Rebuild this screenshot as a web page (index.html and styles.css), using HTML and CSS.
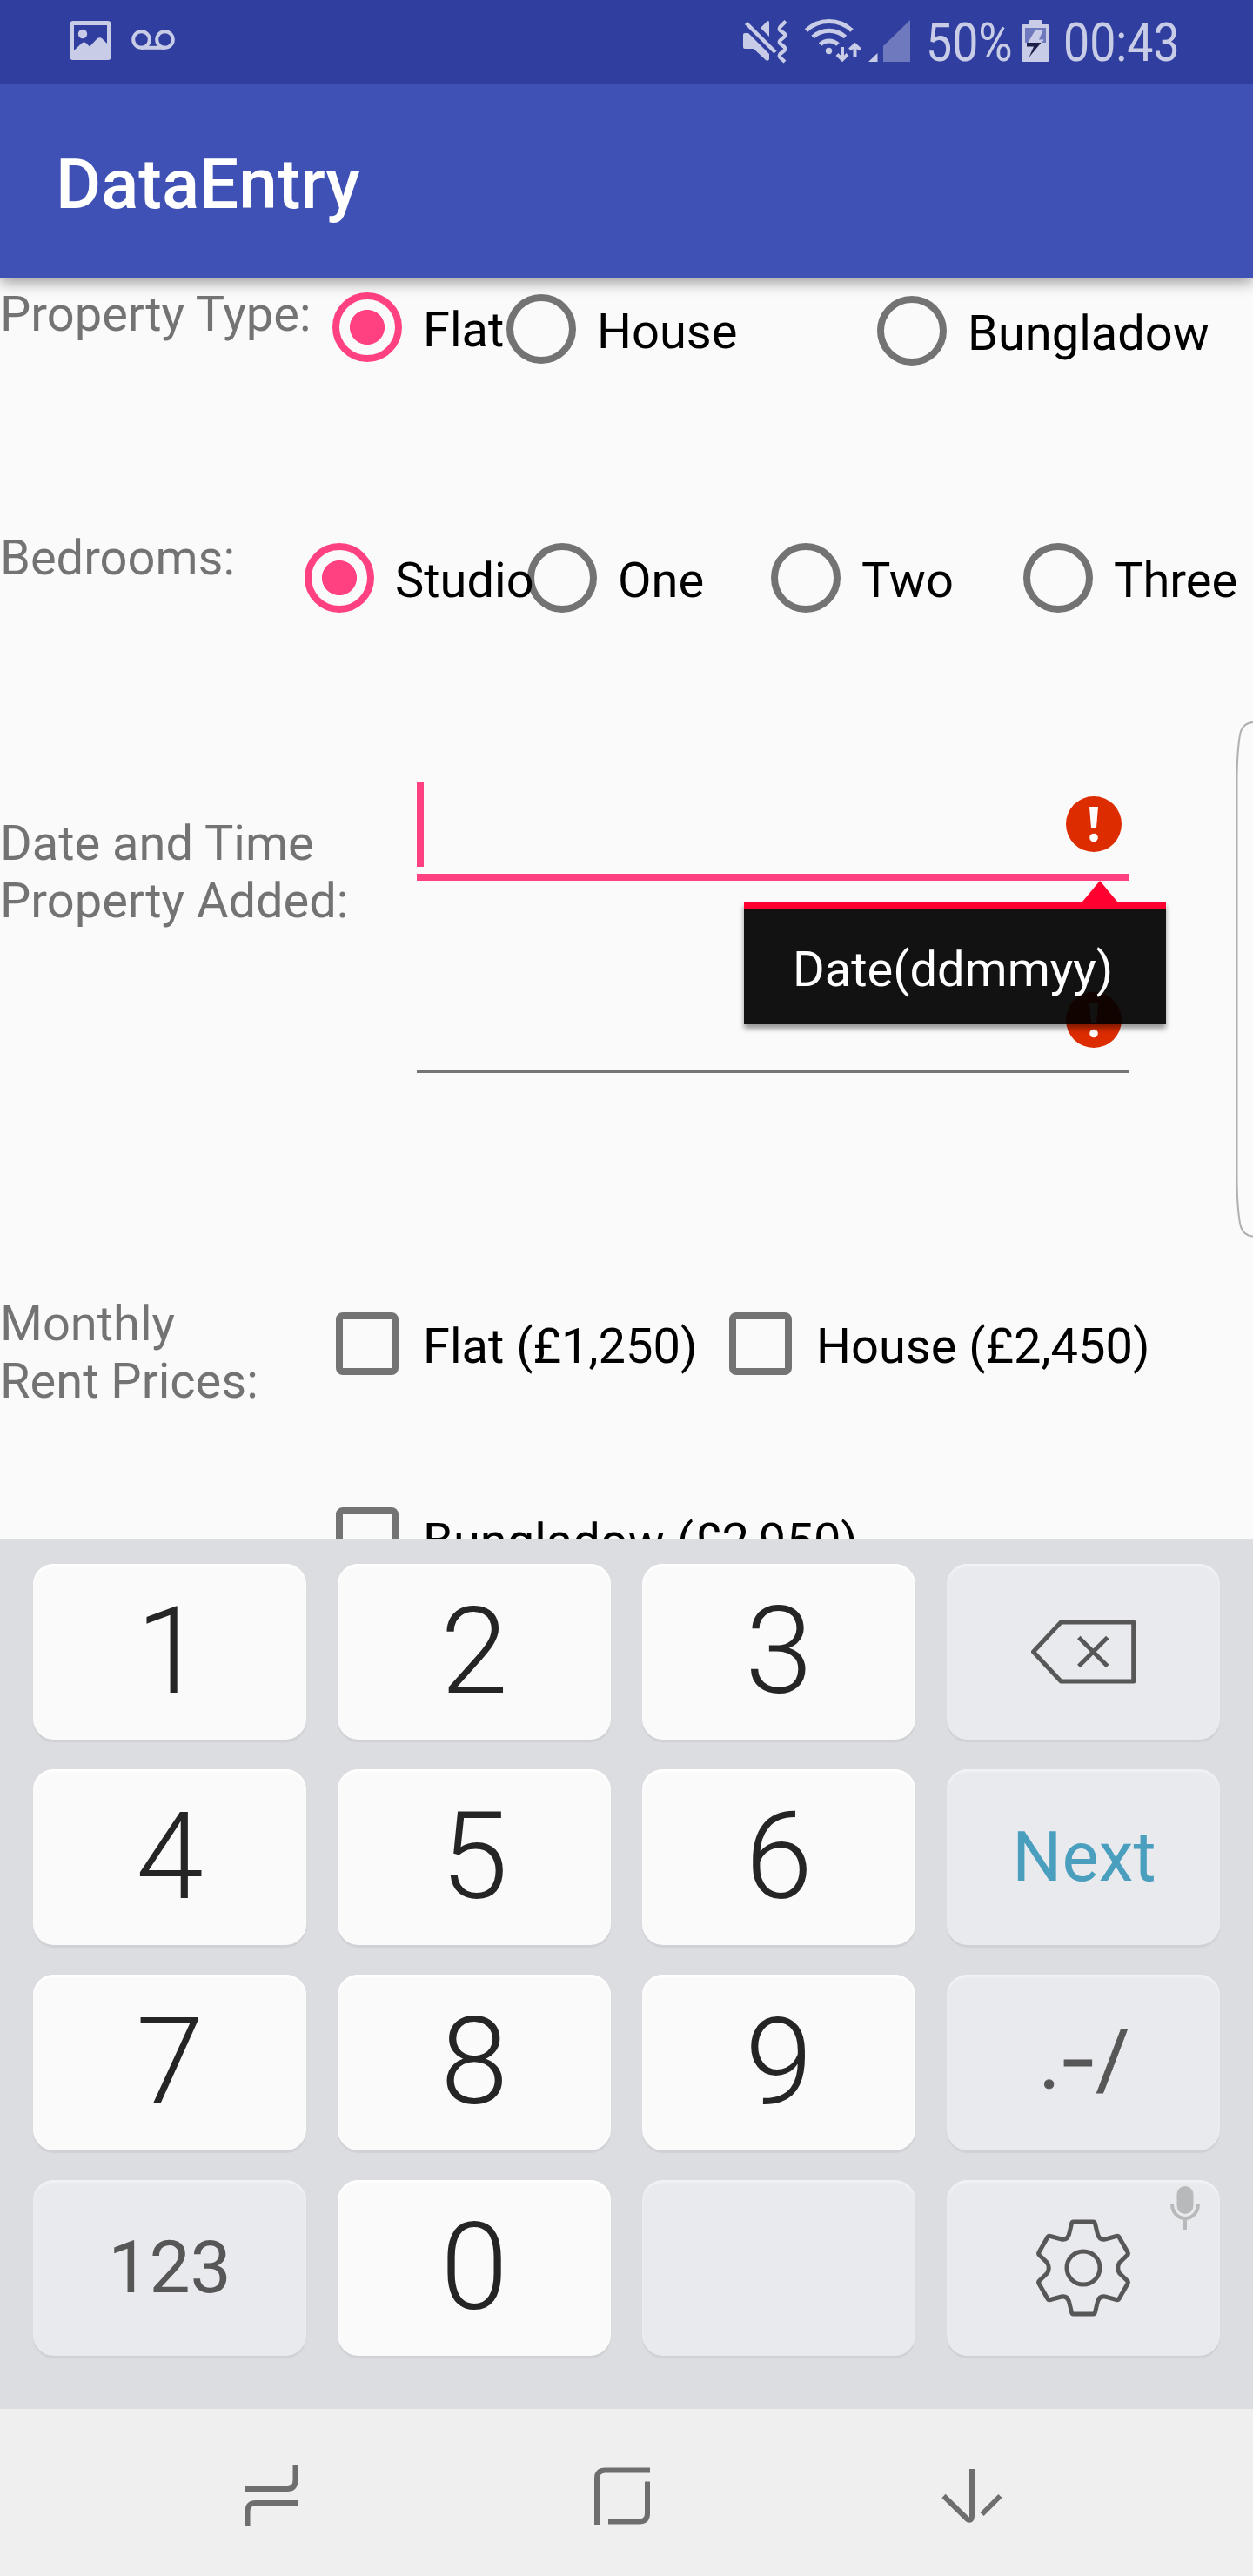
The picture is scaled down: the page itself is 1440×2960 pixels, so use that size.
FILE: index.html
```html
<!DOCTYPE html>
<html lang="en">
<head>
<meta charset="utf-8">
<title>DataEntry</title>
<link rel="stylesheet" href="styles.css">
</head>
<body>
<div class="screen">
  <div class="status">
    <svg class="s-image" viewBox="80 24 48 46" width="48" height="46"><path fill-rule="evenodd" d="M84 24H124Q127.500 24 127.500 27.500V65.500Q127.500 69 124 69H84Q80.500 69 80.500 65.500V27.500Q80.500 24 84 24ZM85 29V58L94 49.500Q96.500 47.500 99 49.500L103 53.500L111.500 44.500Q114.500 42 117.500 44.500L123 50V29Z"/><circle cx="95" cy="39" r="5.200"/></svg>
    <svg class="s-voice" viewBox="150 33 52 25" width="52" height="25"><g fill="none" stroke="#c9cce6" stroke-width="4"><circle cx="162.500" cy="45.500" r="9.300"/><circle cx="189.500" cy="45.500" r="9.300"/><path d="M162 54.800H190"/></g></svg>
    <svg class="s-mute" viewBox="850 20 60 56" width="60" height="56"><path d="M856 38H860L884 62V68Q883 71 880 69L866 56H856Q854 56 854 54V40Q854 38 856 38ZM874 32L881.500 24.500Q884 23 884 26V42Z"/><path d="M859.500 24.500L893.500 58.500" stroke="#303f9f" stroke-width="3"/><path d="M857.500 26.500L891 60" stroke="#c9cce6" stroke-width="4.500"/><path d="M903 24.500L896.500 31Q895 33 896.500 35L901.500 38.500Q903 40 901.500 42L896.500 46.500Q895 48 896.500 50L901.500 54Q903 56 901.500 58L896.500 62Q895 64 896.500 66L902 71" fill="none" stroke="#c9cce6" stroke-width="4.200"/></svg>
    <svg class="s-wifi" viewBox="920 20 130 56" width="130" height="56"><circle cx="952.500" cy="58.500" r="3.700"/><g fill="none" stroke="#c9cce6" stroke-width="5"><path d="M942.500 51A15 15 0 0 1 963 51M934 42.500A28 28 0 0 1 971.500 42.500M926.500 35A38 38 0 0 1 979 35"/><path stroke-width="4" d="M968 54V68M962 62.500L968 68.500L974 62.500M982.500 65.500V52M976.500 57L982.500 51.500L988.500 57"/></g><path d="M998 71L1008.500 61V71Z"/><path d="M1015 71V53L1046 23V71Z" fill="#6f79be"/></svg>
    <span class="s-text s-percent">50%</span>
    <svg class="s-batt" viewBox="1172 20 36 56" width="36" height="56"><path d="M1184 23H1196Q1197.500 23 1197.500 25V28H1204Q1206 28 1206 30V69Q1206 71 1204 71H1176Q1174 71 1174 69V30Q1174 28 1176 28H1182.500V25Q1182.500 23 1184 23Z"/><path d="M1178 32H1202V49H1178Z" fill="#6f79be"/><path d="M1189.500 35H1198.500L1194 45.500H1199.500L1197 49.500H1181Z"/><path d="M1180 49H1196.500L1182.500 66L1188 53.500H1180Z" fill="#1a2047"/></svg>
    <span class="s-text s-clock">00:43</span>
  </div>
  <header class="appbar"><h1>DataEntry</h1></header>

  <main class="form">
    <section class="row type">
      <div class="label">Property Type:</div>
      <div class="opt"><i class="radio on"></i><span>Flat</span></div>
      <div class="opt second"><i class="radio"></i><span>House</span></div>
      <div class="opt third"><i class="radio"></i><span>Bungladow</span></div>
    </section>
    <section class="row beds">
      <div class="label">Bedrooms:</div>
      <div class="opt"><i class="radio on"></i><span>Studio</span></div>
      <div class="opt"><i class="radio"></i><span>One</span></div>
      <div class="opt"><i class="radio"></i><span>Two</span></div>
      <div class="opt"><i class="radio"></i><span>Three</span></div>
    </section>
    <section class="row date">
      <div class="label">Date and Time<br>Property Added:</div>
      <div class="fields">
        <div class="field focus"><i class="caret"></i>
          <svg class="err" viewBox="0 0 64 64" width="64" height="64"><circle cx="32" cy="32" r="32" fill="#dd2c00"/><path d="M27 12H37L35 36H29Z" fill="#fff"/><circle cx="32" cy="47.500" r="4.800" fill="#fff"/></svg>
          <div class="tip">Date(ddmmyy)</div>
        </div>
        <div class="field">
          <svg class="err" viewBox="0 0 64 64" width="64" height="64"><circle cx="32" cy="32" r="32" fill="#dd2c00"/><path d="M27 12H37L35 36H29Z" fill="#fff"/><circle cx="32" cy="47.500" r="4.800" fill="#fff"/></svg>
        </div>
      </div>
    </section>
    <section class="row rent">
      <div class="label">Monthly<br>Rent Prices:</div>
      <div class="checks">
        <div class="opt"><i class="box"></i><span>Flat (£1,250)</span></div>
        <div class="opt"><i class="box"></i><span>House (£2,450)</span></div>
        <div class="opt"><i class="box"></i><span>Bungladow (£2,950)</span></div>
      </div>
    </section>
    <svg class="edge" viewBox="1420 828 20 594" width="20" height="594"><path d="M1441 830Q1429 830 1425.500 842Q1421.500 862 1421.500 900V1350Q1421.500 1388 1425.500 1408Q1429 1420.500 1441 1420.500" fill="none" stroke="#b0b0b0" stroke-width="2"/></svg>
  </main>

  <div class="keys">
    <div class="key">1</div><div class="key">2</div><div class="key">3</div>
    <div class="key fn"><svg viewBox="-60 -40 120 80" width="120" height="80"><g fill="none" stroke="#575757" stroke-width="5" stroke-linejoin="round"><path d="M-57.500 0L-25.700 -34H57.700V34H-25.700Z"/><path d="M-5.200 -16.500L27.800 16.500M27.800 -16.500L-5.200 16.500"/></g></svg></div>
    <div class="key">4</div><div class="key">5</div><div class="key">6</div>
    <div class="key fn next">Next</div>
    <div class="key">7</div><div class="key">8</div><div class="key">9</div>
    <div class="key fn sym"><span>.</span><span class="dash">-</span><span>/</span></div>
    <div class="key fn num">123</div><div class="key">0</div><div class="key fn"></div>
    <div class="key fn gear">
      <svg viewBox="-60 -60 120 120" width="120" height="120"><g fill="none" stroke="#575757" stroke-width="5" stroke-linejoin="round"><circle r="19"/><path d="M-11.500 -53H11.500Q13 -53 13.500 -51L16.500 -38.500Q18.500 -32 25 -33L38 -36.500Q40 -37 41 -35.500L51 -18Q52 -16 50.500 -14.800L41.500 -6Q38 0 41.500 6L50.500 14.800Q52 16 51 18L41 35.500Q40 37 38 36.500L25 33Q18.500 32 16.500 38.500L13.500 51Q13 53 11.500 53H-11.500Q-13 53 -13.500 51L-16.500 38.500Q-18.500 32 -25 33L-38 36.500Q-40 37 -41 35.500L-51 18Q-52 16 -50.500 14.800L-41.500 6Q-38 0 -41.500 -6L-50.500 -14.800Q-52 -16 -51 -18L-41 -35.500Q-40 -37 -38 -36.500L-25 -33Q-18.500 -32 -16.500 -38.500L-13.500 -51Q-13 -53 -11.500 -53Z"/></g></svg>
      <svg class="mic" viewBox="0 0 34 50" width="34" height="50"><rect x="7.500" y="0" width="19" height="32" rx="9.500" fill="#b8b9bb"/><path d="M2 21A15 16 0 0 0 32 21M17 37V50" fill="none" stroke="#b8b9bb" stroke-width="4"/></svg>
    </div>
  </div>

  <nav class="nav">
    <svg viewBox="272 2828 80 80" width="80" height="80"><path d="M339.500 2833V2850Q339.500 2860 330 2860H281M284.500 2903V2886Q284.500 2876 294 2876H342.500"/></svg>
    <svg viewBox="674 2828 80 80" width="80" height="80"><path d="M685 2901V2848Q685 2838.500 694.500 2838.500H746M743 2851.500V2888Q743 2897.500 733.500 2897.500H698"/></svg>
    <svg viewBox="1077 2828 80 80" width="80" height="80"><path stroke-linejoin="round" d="M1084.500 2868L1112 2895Q1114 2896.500 1116 2895Q1117 2894 1117 2891V2837M1149.500 2868L1128.500 2889"/></svg>
  </nav>
</div>
</body>
</html>
```
FILE: styles.css
```css
* { box-sizing: border-box; }
body { margin: 0; font-family: Roboto, "Open Sans", sans-serif; }
.screen { width: 1440px; height: 2960px; display: flex; flex-direction: column; background: #fafafa; overflow: hidden; }
svg { display: block; flex: none; }

.status { height: 96px; flex: none; display: flex; align-items: flex-start; position: relative; z-index: 2; background: #303f9f; fill: #c9cce6; color: #c9cce6; }
.s-image { margin: 24px 0 0 80px; }
.s-voice { margin: 33px 0 0 22px; }
.s-mute { margin: 20px 0 0 648px; }
.s-wifi { margin: 20px 0 0 10px; }
.s-text { font-size: 61px; line-height: 60px; margin-top: 19px; white-space: nowrap; transform: scaleX(.88); transform-origin: 0 0; }
.s-percent { width: 108px; margin-left: 14px; }
.s-batt { margin-top: 20px; }
.s-clock { margin-left: 14px; }

.appbar { height: 224px; flex: none; background: #3f51b5; padding: 7px 0 0 64px; display: flex; align-items: center; position: relative; z-index: 1; box-shadow: 0 4px 16px rgba(0,0,0,.4); }
.appbar h1 { margin: 0; font-size: 80px; font-weight: 500; line-height: 94px; color: #fff; }

.form { height: 1448px; flex: none; position: relative; overflow: hidden; font-size: 56px; line-height: 66px; color: #000; }
.row { display: grid; align-items: start; white-space: nowrap; }
.label { color: rgba(0,0,0,.54); }
.opt { display: flex; align-items: center; gap: 24px; }
.opt span { padding-top: 6px; }
.radio { flex: none; width: 80px; height: 80px; border: 8px solid rgba(0,0,0,.54); border-radius: 50%; }
.radio.on { border-color: #ff4081; background: radial-gradient(circle, #ff4081 19.6px, transparent 20.4px); }
.box { flex: none; width: 72px; height: 72px; border: 8px solid rgba(0,0,0,.54); border-radius: 8px; }

.type { height: 280px; grid-template-columns: 382px 200px 426px 1fr; padding-top: 8px; }
.type .opt { margin-top: 8px; }
.type .second { margin-top: 10px; }
.type .third { margin-top: 12px; }
.beds { height: 280px; grid-template-columns: 350px 256px 280px 290px 1fr; padding-top: 8px; }
.beds .opt { margin-top: 16px; }
.date { height: 584px; grid-template-columns: 479px 819px; }
.date .label { margin-top: 56px; }
.fields { padding-top: 19px; }
.field { height: 109px; display: flex; justify-content: flex-end; padding: 16px 9px 0 0; border-bottom: 4px solid #757575; }
.field.focus { height: 113px; margin-bottom: 112px; border-bottom: 8px solid #ff4081; position: relative; padding-top: 0; justify-content: space-between; }
.focus .err { margin-top: 16px; }
.caret { width: 8px; height: 97px; background: #ff4081; }
.tip { position: absolute; z-index: 2; left: 376px; top: 137px; width: 485px; height: 141px; padding: 37px 0 0 56px; border-top: 8px solid #ff0030; background: rgba(0,0,0,.93); background-clip: padding-box; color: #fff; box-shadow: 0 5px 6px rgba(0,0,0,.4); }
.tip::before { content: ""; position: absolute; left: 389px; top: -32px; border: solid transparent; border-width: 0 20px 24px; border-bottom-color: #ff0030; }
.rent { grid-template-columns: 386px 1fr; }
.rent .label { margin-top: 24px; }
.checks { display: grid; grid-template-columns: 452px 1fr; row-gap: 152px; padding-top: 44px; }
.checks .opt { gap: 28px; }
.edge { position: absolute; right: 0; top: 508px; }

.keys { height: 1000px; flex: none; background: #dcdde1; padding: 29px 38px 0; display: grid; grid-template-columns: repeat(4, 314px); grid-auto-rows: 202px; gap: 34px 36px; align-content: start; }
.key { display: flex; align-items: center; justify-content: center; border-radius: 24px; background: #fafafa; color: #252525; font-size: 140px; font-weight: 300; line-height: 1; padding-bottom: 2px; box-shadow: 0 3px 1px #d0d1d5, inset 0 3px 2px #fff; }
.fn { position: relative; background: #e9eaee; color: #575757; font-weight: 400; padding: 0; box-shadow: 0 3px 1px #d0d1d5, inset 0 3px 2px #f1f2f4; }
.next { font-size: 80px; color: #4a9fbf; padding-left: 2px; }
.num { font-size: 84px; }
.sym { font-size: 94px; -webkit-text-stroke: .8px #575757; padding: 0 0 6px 2px; }
.dash { transform: scaleX(1.4); margin: 0 8px 0 7px; }
.mic { position: absolute; left: 257px; top: 7px; }

.nav { height: 192px; flex: none; background: #efefef; display: flex; gap: 322.500px; padding: 60px 0 0 272px; fill: none; stroke: #6e6e6e; stroke-width: 6; }
```
